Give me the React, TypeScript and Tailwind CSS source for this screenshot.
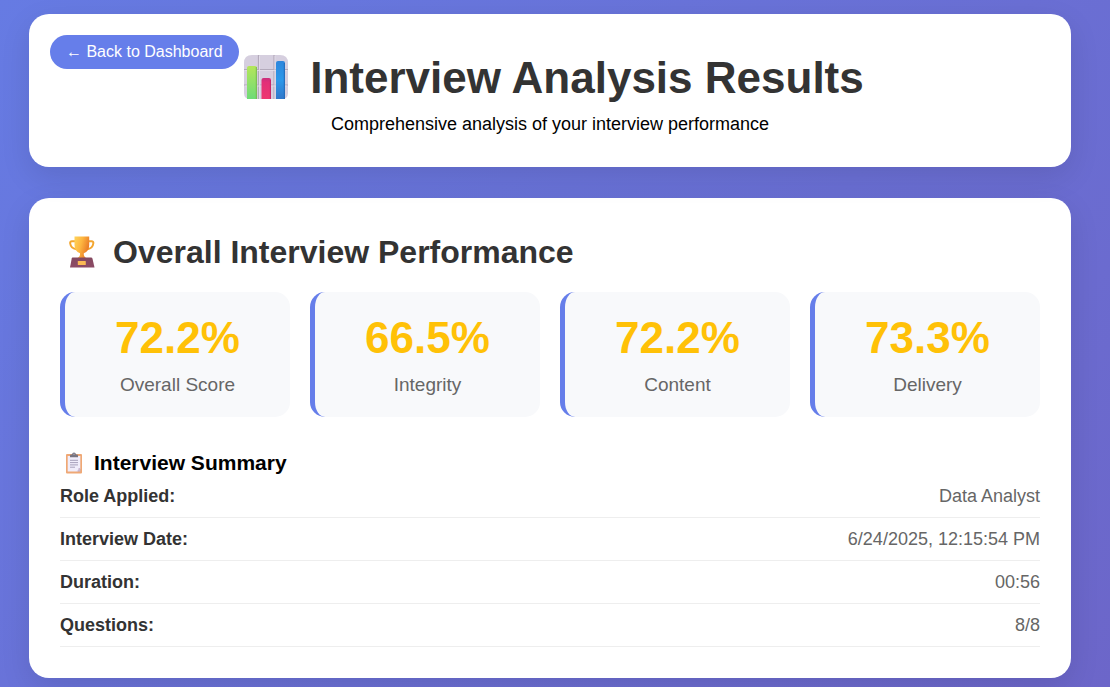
import React from "react";

type Stat = { value: string; label: string };
type Detail = { label: string; value: string };

const stats: Stat[] = [
  { value: "72.2%", label: "Overall Score" },
  { value: "66.5%", label: "Integrity" },
  { value: "72.2%", label: "Content" },
  { value: "73.3%", label: "Delivery" },
];

const details: Detail[] = [
  { label: "Role Applied:", value: "Data Analyst" },
  { label: "Interview Date:", value: "6/24/2025, 12:15:54 PM" },
  { label: "Duration:", value: "00:56" },
  { label: "Questions:", value: "8/8" },
];

function ChartIcon() {
  return (
    <svg viewBox="0 0 44 44" className="size-11" aria-hidden="true">
      <defs>
        <linearGradient id="chart-green" x1="0" y1="0" x2="0" y2="1">
          <stop offset="0" stopColor="#b5e65a" />
          <stop offset="1" stopColor="#6edb78" />
        </linearGradient>
        <linearGradient id="chart-pink" x1="0" y1="0" x2="0" y2="1">
          <stop offset="0" stopColor="#c9307c" />
          <stop offset="0.2" stopColor="#e22f78" />
          <stop offset="1" stopColor="#ee386f" />
        </linearGradient>
        <linearGradient id="chart-blue" x1="0" y1="0" x2="0" y2="1">
          <stop offset="0" stopColor="#2d86dc" />
          <stop offset="0.5" stopColor="#2c98ea" />
          <stop offset="1" stopColor="#3177ca" />
        </linearGradient>
      </defs>
      <path d="M8 0H36Q44 0 44 8V38Q44 44 38 44H6Q0 44 0 38V8Q0 0 8 0Z" fill="#d6cfdf" />
      <path d="M14.5 0V44M30 0V44M0 14.5H44M0 30H44" stroke="#b3aabb" strokeWidth="1.2" />
      <path d="M15.5 1V44M31 1V44M1 15.5H43M1 31H43" stroke="#e4deea" strokeWidth="0.8" />
      <path d="M3 44V13Q3 11 5 11H11Q13 11 13 13V44Z" fill="url(#chart-green)" />
      <path d="M12.3 12V44" stroke="#78b94e" strokeWidth="1" />
      <path d="M17.5 44V25Q17.5 23 19.5 23H25Q27 23 27 25V44Z" fill="url(#chart-pink)" />
      <path d="M26.4 25V44" stroke="#b92366" strokeWidth="0.8" />
      <path d="M32 44V8Q32 6 34 6H39Q41 6 41 8V44Z" fill="url(#chart-blue)" />
      <path d="M40.3 8V44" stroke="#2268b7" strokeWidth="1" />
    </svg>
  );
}

function TrophyIcon() {
  return (
    <svg viewBox="0 0 28 32" className="h-8 w-7" aria-hidden="true">
      <defs>
        <linearGradient id="trophy-cup" x1="0" y1="0" x2="1" y2="0.4">
          <stop offset="0" stopColor="#ffd45b" />
          <stop offset="0.5" stopColor="#fdb640" />
          <stop offset="1" stopColor="#e97b26" />
        </linearGradient>
        <linearGradient id="trophy-base" x1="0" y1="0" x2="0" y2="1">
          <stop offset="0" stopColor="#84485f" />
          <stop offset="1" stopColor="#8d4b66" />
        </linearGradient>
      </defs>
      <path d="M8 5.2H4Q1.8 5.2 2.2 7.5Q2.8 12.3 8.3 13.2M20 5.2H23.5Q25.7 5.2 25.3 7.5Q24.7 12.3 19.4 13.2" fill="none" stroke="#f3a62f" strokeWidth="2" />
      <path d="M6.5 0.5H21.2V9Q21.2 15.5 15.8 17.2V19Q16 20.5 18 22H9.6Q11.8 20.5 12 19V17.2Q6.5 15.5 6.5 9Z" fill="url(#trophy-cup)" />
      <path d="M4.5 21.5H23Q24.2 21.5 24.5 22.7L26.5 31.5H2L3.7 22.5Q4 21.5 4.5 21.5Z" fill="url(#trophy-base)" />
      <rect x="9.8" y="25" width="8" height="4" rx="0.6" fill="#fbba55" />
    </svg>
  );
}

function ClipboardIcon() {
  return (
    <svg viewBox="0 0 18 22" className="h-[22px] w-[18px]" aria-hidden="true">
      <rect x="1" y="2" width="16" height="19.5" rx="1" fill="#efa875" />
      <path d="M2.7 4H15.3V17L12.5 19.5H2.7Z" fill="#f0edfb" />
      <path d="M15.3 16V19.5H11.5Q13.8 18.5 13.6 16Z" fill="#c9b9d3" />
      <path d="M5 8.3H13M5 10.6H13M5 12.9H13M5 15.2H10" stroke="#a7a0bb" strokeWidth="1" />
      <path d="M5 5.2V3.4Q5 2.5 6 2.5H7Q7.2 0.5 9 0.5Q10.8 0.5 11 2.5H12Q13 2.5 13 3.4V5.2Z" fill="#777480" />
      <circle cx="9" cy="2.2" r="0.6" fill="#c5c0cd" />
    </svg>
  );
}

export default function App() {
  return (
    <div className="min-h-screen bg-linear-135 from-[#667be3] to-[#6c66c9] pt-3.5 pr-[39px] pb-[9px] pl-[29px] font-['Liberation_Sans',Arial,sans-serif] text-black">
      <header className="relative mb-[31px] rounded-[20px] bg-white px-[31px] pt-[31px] pb-[29px] text-center shadow-[0_10px_30px_rgba(0,0,0,0.1)]">
        <a
          href="#dashboard"
          className="absolute top-[21px] left-[21px] flex h-[34px] items-center rounded-full bg-[#667eea] px-4 text-base text-white"
        >
          ← Back to Dashboard
        </a>
        <h1 className="flex items-center justify-center text-[44px] leading-[65px] font-bold text-[#333]">
          <span className="mr-3.5 flex w-[60px] justify-center pb-0.5">
            <ChartIcon />
          </span>
          Interview Analysis Results
        </h1>
        <p className="text-lg leading-7">Comprehensive analysis of your interview performance</p>
      </header>

      <main className="rounded-[20px] bg-white p-[31px] shadow-[0_10px_30px_rgba(0,0,0,0.1)]">
        <h2 className="mb-[17px] flex items-center text-[32px] leading-[46px] font-bold text-[#333]">
          <span className="mr-2.5 flex w-[43px] justify-center">
            <TrophyIcon />
          </span>
          Overall Interview Performance
        </h2>

        <section className="mb-[33px] grid grid-cols-4 gap-5">
          {stats.map((s) => (
            <div key={s.label} className="rounded-[15px] border-l-[5px] border-[#667eea] bg-[#f8f9fb] py-5 text-center">
              <div className="mb-2 text-[44px] leading-[52px] font-bold text-[#ffc107]">{s.value}</div>
              <div className="text-[19px] leading-[25px] text-[#666]">{s.label}</div>
            </div>
          ))}
        </section>

        <section>
          <h3 className="flex items-center text-[21px] leading-[25px] font-bold">
            <span className="mr-1.5 flex w-7 justify-center">
              <ClipboardIcon />
            </span>
            Interview Summary
          </h3>
          <dl>
            {details.map((d) => (
              <div key={d.label} className="flex justify-between border-b border-[#eee] py-2 text-lg leading-[26px]">
                <dt className="font-bold text-[#333]">{d.label}</dt>
                <dd className="text-[#666]">{d.value}</dd>
              </div>
            ))}
          </dl>
        </section>
      </main>
    </div>
  );
}
